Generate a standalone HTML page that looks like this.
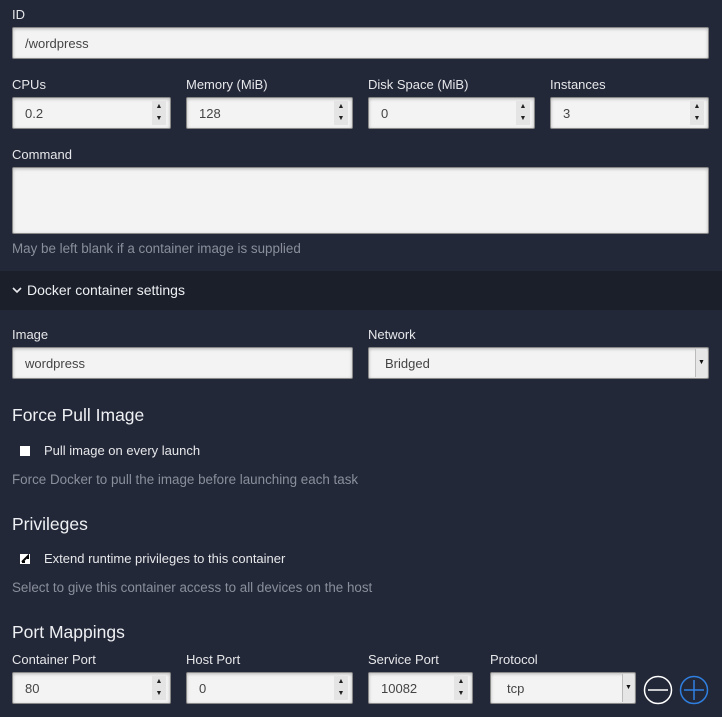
<!DOCTYPE html>
<html><head><style>
*{box-sizing:border-box;margin:0;padding:0}
body{width:722px;height:717px;background:#232838;font-family:"Liberation Sans",sans-serif;color:#e8e9ec;position:relative;overflow:hidden}
.a{position:absolute}
.l{font-size:13px;color:#e6e7ea;line-height:16px;margin-top:1px}
.in{position:absolute;height:32px;background:#f3f3f3;border:1px solid #888;border-radius:2px;font-size:13px;color:#444;padding:0 12px;line-height:32px;box-shadow:inset 0 1px 3px rgba(0,0,0,.25)}
.sp{position:absolute;right:4px;top:3px;width:14px;height:24px;background:#e4e4e4;font-size:7px;line-height:12px;text-align:center;color:#222}
.h{font-size:13.4px;color:#8a8f9c;margin-top:1px}
.t{font-size:17.5px;color:#eef0f3;margin-top:1px}
.sel{position:absolute;right:1px;top:1px;width:12px;height:28px;background:#e6e6e6;border-left:1px solid #bbb;font-size:7px;line-height:28px;text-align:center;color:#111}
.cb{position:absolute;width:10px;height:10px;background:#fff}
</style></head><body>
<div class="a l" style="left:12px;top:6px">ID</div>
<div class="in" style="left:12px;top:27px;width:697px">/wordpress</div>

<div class="a l" style="left:12px;top:76px">CPUs</div>
<div class="a l" style="left:186px;top:76px">Memory (MiB)</div>
<div class="a l" style="left:368px;top:76px">Disk Space (MiB)</div>
<div class="a l" style="left:550px;top:76px">Instances</div>
<div class="in" style="left:12px;top:97px;width:159px">0.2<div class="sp">▲<br>▼</div></div>
<div class="in" style="left:186px;top:97px;width:167px">128<div class="sp">▲<br>▼</div></div>
<div class="in" style="left:368px;top:97px;width:167px">0<div class="sp">▲<br>▼</div></div>
<div class="in" style="left:550px;top:97px;width:159px">3<div class="sp">▲<br>▼</div></div>

<div class="a l" style="left:12px;top:146px">Command</div>
<div class="in" style="left:12px;top:167px;width:697px;height:67px"></div>
<div class="a h" style="left:12px;top:240px">May be left blank if a container image is supplied</div>

<div class="a" style="left:0;top:271px;width:722px;height:39px;background:#1b1f2a"></div>
<svg class="a" style="left:12px;top:286px" width="10" height="8"><path d="M1 2 L5 6 L9 2" stroke="#e8e9ec" stroke-width="1.6" fill="none"/></svg>
<div class="a" style="left:27px;top:282px;font-size:14px;color:#eef0f3">Docker container settings</div>

<div class="a l" style="left:12px;top:326px">Image</div>
<div class="a l" style="left:368px;top:326px">Network</div>
<div class="in" style="left:12px;top:347px;width:341px">wordpress</div>
<div class="in" style="left:368px;top:347px;width:341px;padding-left:16px">Bridged<div class="sel">▼</div></div>

<div class="a t" style="left:12px;top:404px">Force Pull Image</div>
<div class="cb" style="left:20px;top:446px"></div>
<div class="a l" style="left:44px;top:442px">Pull image on every launch</div>
<div class="a h" style="left:12px;top:471px">Force Docker to pull the image before launching each task</div>

<div class="a t" style="left:12px;top:513px">Privileges</div>
<div class="cb" style="left:20px;top:554px"><svg width="10" height="10" style="display:block"><path d="M2 8 L8 2 L8 5 M2 8 L5 8" stroke="#000" stroke-width="2" fill="none"/></svg></div>
<div class="a l" style="left:44px;top:550px">Extend runtime privileges to this container</div>
<div class="a h" style="left:12px;top:579px">Select to give this container access to all devices on the host</div>

<div class="a t" style="left:12px;top:621px">Port Mappings</div>
<div class="a l" style="left:12px;top:651px">Container Port</div>
<div class="a l" style="left:186px;top:651px">Host Port</div>
<div class="a l" style="left:368px;top:651px">Service Port</div>
<div class="a l" style="left:490px;top:651px">Protocol</div>
<div class="in" style="left:12px;top:672px;width:159px">80<div class="sp">▲<br>▼</div></div>
<div class="in" style="left:186px;top:672px;width:167px">0<div class="sp">▲<br>▼</div></div>
<div class="in" style="left:368px;top:672px;width:105px">10082<div class="sp">▲<br>▼</div></div>
<div class="in" style="left:490px;top:672px;width:146px;padding-left:16px">tcp<div class="sel">▼</div></div>
<svg class="a" style="left:643px;top:675px" width="66" height="30">
<circle cx="15" cy="15" r="13.5" stroke="#fff" stroke-width="1.5" fill="none"/><path d="M5 15 H25" stroke="#fff" stroke-width="1.5"/>
<circle cx="51" cy="15" r="13.5" stroke="#2f7fe0" stroke-width="1.5" fill="none"/><path d="M41 15 H61 M51 5 V25" stroke="#2f7fe0" stroke-width="1.5"/>
</svg>
</body></html>
